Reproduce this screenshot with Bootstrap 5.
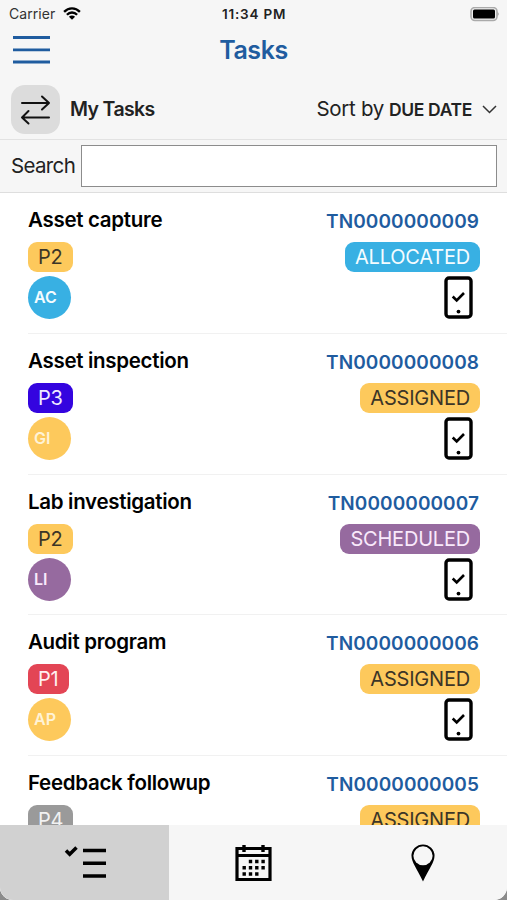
<!DOCTYPE html>
<html lang="en">
<head>
<meta charset="utf-8">
<meta name="viewport" content="width=device-width, initial-scale=1">
<title>Tasks</title>
<link href="https://cdn.jsdelivr.net/npm/bootstrap@5.3.0/dist/css/bootstrap.min.css" rel="stylesheet">
<style>
html, body { height: 100%; }
body { font-family: Inter, "Liberation Sans", sans-serif; color: #222; background: #8b8b8b; overflow: hidden; line-height: 1.2; }
.phone { height: 900px; background: #fff; border-radius: 0 0 13px 13px; }
svg { display: block; flex: none; }
.bar { background: #f6f6f6; }
.status { height: 28px; padding: 0 8px 0 9px; }
.carrier { font-size: 14px; color: #333; letter-spacing: .05px; }
.clock { font-size: 13.5px; font-weight: 600; letter-spacing: .8px; }
.titlebar { height: 51px; padding: 0 12px; }
.titlebar h1 { font-size: 25px; font-weight: 600; line-height: 44px; letter-spacing: -.4px; }
.side { flex: 1 1 0; }
.filter { height: 61px; padding: 0 10px 0 11px; border-bottom: 1px solid #e2e2e2; }
.mine { font-size: 19.5px; font-weight: 600; letter-spacing: -.65px; padding: 2px 0 0 10px; }
.sort { font-size: 20.5px; letter-spacing: -.3px; }
.order { font-size: 17.5px; font-weight: 600; letter-spacing: -.35px; margin: 0 10px 0 5px; }
.search { height: 53px; padding: 5px 10px 5px 11px; border-bottom: 1px solid #dedede; }
.search label { font-size: 20.5px; letter-spacing: -.65px; width: 70px; }
.search input { border: 1px solid #8c8c8c; height: 42px; background: #fff; }
.blue { color: #1f5c9f; }
.swap { width: 49px; height: 49px; border-radius: 14px; background: #dcdcdc; }
.task { height: 140.75px; margin-left: 28px; padding: 14px 27px 0 0; border-bottom: 1px solid #f1f1f1; }
.headline { height: 35px; }
.headline h2 { font-size: 20.5px; font-weight: 600; letter-spacing: -.3px; line-height: 25px; }
.number { font-size: 19px; font-weight: 600; line-height: 29px; letter-spacing: .08px; padding-right: 1px; }
.pill { height: 30px; border-radius: 9px; padding: 0 10px; font-size: 20px; line-height: 30px; letter-spacing: -.2px; }
.amber { background: #fdc95c; color: #3c3527; }
.sky { background: #38b0e3; color: #f4fcff; }
.plum { background: #966a9f; color: #f9e9fb; }
.indigo { background: #3404df; color: #eee9ff; }
.rose { background: #e34555; color: #fff0f0; }
.ash { background: #9a9a9a; color: #f2f2f2; }
.avatar { width: 43px; height: 43px; padding-left: 6px; font-size: 16px; font-weight: 600; line-height: 43px; }
.amber.avatar { color: #fff3d6; }
.device { margin-right: 7px; }
.tabs { height: 75px; flex: none; }
.tab.current { background: #d1d1d1; }
</style>
</head>
<body>
<svg width="0" height="0" class="position-absolute">
  <symbol id="device" viewBox="0 0 29 43">
    <rect x="2" y="2" width="25" height="39" rx="3" fill="#fff" stroke="#000" stroke-width="3.4"/>
    <path d="M8.700 20.500l4 4 7.300-7.500" fill="none" stroke="#000" stroke-width="2.600"/>
    <circle cx="14.500" cy="35.600" r="1.900"/>
  </symbol>
</svg>
<div class="phone d-flex flex-column overflow-hidden">
  <header class="bar">
    <div class="status d-flex align-items-center">
      <div class="side d-flex align-items-center">
        <span class="carrier me-2">Carrier</span>
        <svg width="18" height="13" viewBox="0 0 19 14" fill="none" stroke="#000" stroke-width="2.500"><path d="M1 5.200C5.800.2 13.200.2 18 5.200M4 8.300c3.200-3.200 7.800-3.200 11 0"/><path d="M6.200 10.400c1.900-1.800 4.700-1.800 6.600 0L9.500 13.800z" fill="#000" stroke="none"/></svg>
      </div>
      <span class="clock">11:34 PM</span>
      <div class="side d-flex justify-content-end">
        <svg width="31" height="15" viewBox="0 0 31 15"><rect x="3" y=".5" width="26" height="13" rx="4" fill="#eee" stroke="#aaa" stroke-width="1.600"/><rect x="5" y="2.500" width="22" height="9" rx="1.500"/><path d="M29.700 5q2 2 0 4z" fill="#999"/></svg>
      </div>
    </div>
    <div class="titlebar d-flex">
      <div class="side"><svg class="mt-2" width="38" height="28" viewBox="0 0 38 28" stroke="#1f5c9f" stroke-width="2.800"><path d="M1 1.500h37M1 13.800h37M1 26h37"/></svg></div>
      <h1 class="blue m-0">Tasks</h1>
      <div class="side"></div>
    </div>
    <div class="filter d-flex justify-content-between align-items-center">
      <div class="d-flex align-items-center">
        <div class="swap d-flex align-items-center justify-content-center"><svg width="31" height="31" viewBox="0 0 31 31" fill="none" stroke="#111" stroke-width="2" stroke-linecap="round" stroke-linejoin="round"><path d="M2 9h27M22 2.500L29 9l-7 6.500M29 23.500H2M8.500 17L2 23.500l6.500 6"/></svg></div>
        <span class="mine">My Tasks</span>
      </div>
      <div class="d-flex align-items-center">
        <span class="sort">Sort by</span>
        <span class="order">DUE DATE</span>
        <svg width="15" height="9" viewBox="0 0 15 9" fill="none" stroke="#333" stroke-width="1.500"><path d="M1 1l6.500 6.500L14 1"/></svg>
      </div>
    </div>
    <div class="search d-flex align-items-center">
      <label for="query">Search</label>
      <input id="query" class="flex-fill" type="text">
    </div>
  </header>
  <main id="tasks" class="flex-fill overflow-hidden"></main>
  <nav class="tabs bar row g-0">
    <div class="tab current col-4 d-flex justify-content-center align-items-center">
      <svg width="42" height="36" viewBox="0 0 42 36" fill="none" stroke="#000"><path d="M2 5.500l3.700 3.700L12.500 2.500" stroke-width="3.500"/><path d="M19 5.500h23M19 18.200h23M19 31h23" stroke-width="3.600"/></svg>
    </div>
    <div class="tab col-4 d-flex justify-content-center align-items-center">
      <svg width="37" height="38" viewBox="0 0 37 38"><path d="M2 4.500h33v31H2zM2 11.500h33" fill="none" stroke="#000" stroke-width="3.200"/><path d="M9 1v7M28 1v7" stroke="#000" stroke-width="3.400"/><path d="M13.800 17.500H31M7.500 23.800H31M7.500 30H25" stroke="#000" stroke-width="3.400" stroke-dasharray="3.400 2.900"/></svg>
    </div>
    <div class="tab col-4 d-flex justify-content-center align-items-center">
      <svg width="24" height="38" viewBox="0 0 24 38"><path d="M.5 12C.5 18 6 25 12 37.500 18 25 23.500 18 23.500 12z"/><circle cx="12" cy="11.700" r="9.600" fill="#f6f6f6"/><path d="M1.400 12a10.600 10.600 0 0 1 21.200 0" fill="none" stroke="#000" stroke-width="1.900"/></svg>
    </div>
  </nav>
</div>
<script>
const tasks = [
  { name: "Asset capture", number: "TN0000000009", priority: ["P2", "amber"], state: ["ALLOCATED", "sky"], badge: ["AC", "sky"] },
  { name: "Asset inspection", number: "TN0000000008", priority: ["P3", "indigo"], state: ["ASSIGNED", "amber"], badge: ["GI", "amber"] },
  { name: "Lab investigation", number: "TN0000000007", priority: ["P2", "amber"], state: ["SCHEDULED", "plum"], badge: ["LI", "plum"] },
  { name: "Audit program", number: "TN0000000006", priority: ["P1", "rose"], state: ["ASSIGNED", "amber"], badge: ["AP", "amber"] },
  { name: "Feedback followup", number: "TN0000000005", priority: ["P4", "ash"], state: ["ASSIGNED", "amber"] }
];
document.getElementById("tasks").innerHTML = tasks.map(t => `
  <article class="task">
    <div class="headline d-flex justify-content-between">
      <h2 class="text-black m-0">${t.name}</h2>
      <span class="number blue">${t.number}</span>
    </div>
    <div class="d-flex justify-content-between">
      <span class="pill ${t.priority[1]}">${t.priority[0]}</span>
      <span class="pill ${t.state[1]}">${t.state[0]}</span>
    </div>
    ${t.badge ? `<div class="d-flex justify-content-between pt-1">
      <div class="avatar rounded-circle ${t.badge[1]}">${t.badge[0]}</div>
      <svg class="device" width="29" height="43"><use href="#device"/></svg>
    </div>` : ""}
  </article>`).join("");
</script>
<script src="https://cdn.jsdelivr.net/npm/bootstrap@5.3.0/dist/js/bootstrap.bundle.min.js"></script>
</body>
</html>
